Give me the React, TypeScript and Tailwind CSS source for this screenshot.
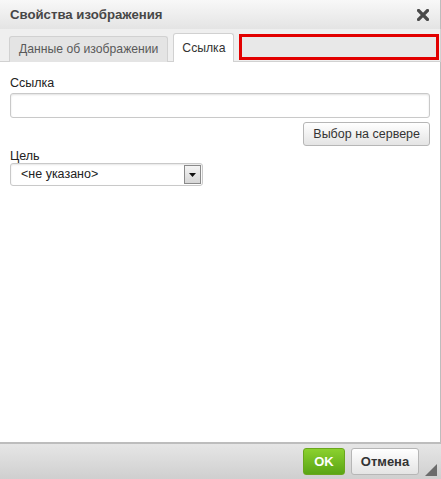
import React from 'react';

const App: React.FC = () => {
    return (
        <div className="w-[441px] h-[479px] flex flex-col bg-white font-['Liberation_Sans',Arial,sans-serif] text-[12.5px] text-[#222]">
            <div className="h-[29px] flex items-center justify-between pl-[10px] pr-[10px] bg-gradient-to-b from-[#f8f8f8] to-[#e4e4e4] border-r border-[#bdbdbd]">
                <span className="text-[13.2px] font-bold text-[#474747]">Свойства изображения</span>
                <svg width="12" height="12" viewBox="0 0 12 12" className="mr-[1px]">
                    <path d="M1.5 1.5 L10.5 10.5 M10.5 1.5 L1.5 10.5" stroke="#4a4a4a" strokeWidth="3.2" strokeLinecap="square" />
                </svg>
            </div>
            <div className="h-[33px] flex items-end pl-[9px] bg-[#efefef] border-b border-r border-[#d1d1d1] text-[12.2px]">
                <div className="h-[26px] px-[9px] flex items-center border border-b-0 border-[#d1d1d1] rounded-t-[3px] bg-[#e4e4e4] text-[#595959] mb-[-1px]">
                    Данные об изображении
                </div>
                <div className="ml-[5px] h-[29px] w-[61px] justify-center flex items-center border border-b-0 border-[#d1d1d1] rounded-t-[3px] bg-white text-[#333] mb-[-1px] pt-[1px]">
                    Ссылка
                </div>
                <div className="ml-[5px] h-[26px] flex-1 mr-[1px] mb-[1px] border-[3px] border-[#e20000] bg-[#e8e8e8]" />
            </div>
            <div className="flex-1 flex flex-col px-[10px] pt-[14px] border-r border-[#bdbdbd]">
                <label className="leading-[14px] text-[#222]">Ссылка</label>
                <input className="mt-[3px] h-[25px] w-full border border-[#c9c9c9] rounded-[3px] shadow-[inset_0_1px_2px_rgba(0,0,0,0.12)] outline-none" />
                <div className="flex justify-end mt-[4px]">
                    <button className="h-[24px] px-[9px] border border-[#b6b6b6] rounded-[3px] bg-gradient-to-b from-[#ffffff] to-[#e4e4e4] text-[#333]">
                        Выбор на сервере
                    </button>
                </div>
                <label className="mt-[3px] leading-[14px] text-[#222]">Цель</label>
                <div className="mt-[0px] w-[193px] h-[23px] flex items-center border border-[#c9c9c9] rounded-[3px] shadow-[inset_0_1px_2px_rgba(0,0,0,0.1)]">
                    <span className="flex-1 pl-[10px] text-[#222]">&lt;не указано&gt;</span>
                    <div className="w-[17px] h-[19px] mr-[1px] flex items-center justify-center border border-[#8a8a8a] bg-gradient-to-b from-[#f4f4f4] to-[#d6d6d6]">
                        <svg width="7" height="4" viewBox="0 0 7 4">
                            <path d="M0 0 L7 0 L3.5 4 Z" fill="#111" />
                        </svg>
                    </div>
                </div>
            </div>
            <div className="h-[37px] flex items-center justify-end gap-[6px] pr-[22px] border-t-2 border-[#bdbdbd] bg-gradient-to-b from-[#e6e6e6] to-[#cfcfcf] relative">
                <button className="w-[42px] h-[27px] rounded-[3px] border border-[#6aa61d] bg-gradient-to-b from-[#8bd12e] to-[#5aa514] text-white font-bold text-[13px]">
                    OK
                </button>
                <button className="w-[68px] h-[27px] rounded-[3px] border border-[#b6b6b6] bg-gradient-to-b from-[#ffffff] to-[#e4e4e4] text-[#333] font-bold text-[13px]">
                    Отмена
                </button>
                <svg width="12" height="12" viewBox="0 0 12 12" className="absolute right-[4px] bottom-[3px]">
                    <path d="M12 0 L12 12 L0 12 Z" fill="#6b6b6b" />
                </svg>
            </div>
        </div>
    );
};

export default App;
